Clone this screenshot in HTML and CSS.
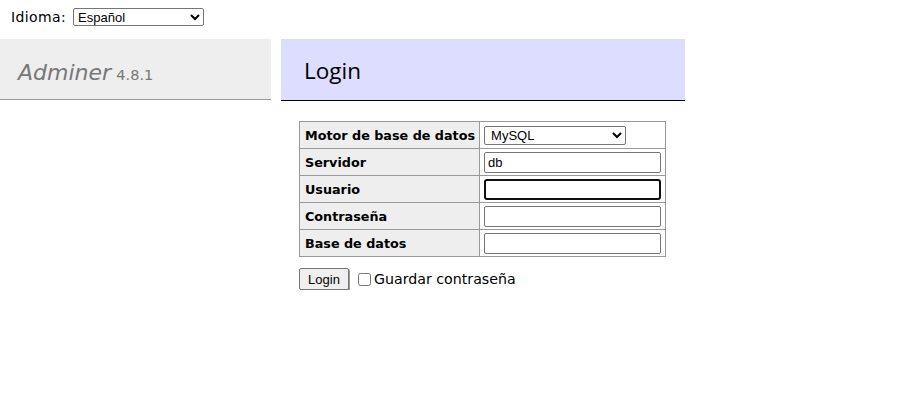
FILE: index.html
```html
<!DOCTYPE html>
<html lang="es">
<head>
<meta charset="utf-8">
<title>Login - Adminer</title>
<link rel="stylesheet" href="styles.css">
</head>
<body>
<div class="lang">
  <label>Idioma: <select class="lang-select"><option>Español</option></select></label>
</div>
<div class="main">
  <div class="menu">
    <h1><span class="brand">Adminer</span> <span class="version">4.8.1</span></h1>
  </div>
  <div class="content">
    <h2>Login</h2>
    <form class="login-form">
      <table class="login-table">
        <tr><th>Motor de base de datos</th><td><select class="driver"><option>MySQL</option></select></td></tr>
        <tr><th>Servidor</th><td><input class="field" type="text" value="db"></td></tr>
        <tr><th>Usuario</th><td><input class="field field-focus" type="text" value=""></td></tr>
        <tr><th>Contraseña</th><td><input class="field" type="password" value=""></td></tr>
        <tr><th>Base de datos</th><td><input class="field" type="text" value=""></td></tr>
      </table>
      <div class="actions">
        <button class="btn" type="button">Login</button>
        <label class="remember"><input class="check" type="checkbox">Guardar contraseña</label>
      </div>
    </form>
  </div>
</div>
</body>
</html>
```

FILE: styles.css
```css
html, body {
  margin: 0;
  padding: 0;
  background: #fff;
  color: #000;
  font-family: "DejaVu Sans", Verdana, sans-serif;
  font-size: 13px;
}

.lang {
  height: 39px;
  box-sizing: border-box;
  padding: 8px 11px 0;
  font-size: 14px;
  letter-spacing: 0.4px;
}

.lang-select {
  font-family: "Liberation Sans", Arial, sans-serif;
  font-size: 13px;
  letter-spacing: 0;
  width: 131px;
  height: 18px;
  padding: 0;
  margin-left: 2px;
  border: 1px solid #767676;
  border-radius: 2px;
  background: #fff;
  color: #000;
}

.main {
  display: flex;
  gap: 10px;
  align-items: flex-start;
}

.menu {
  width: 271px;
  flex: none;
}

.menu h1 {
  margin: 0;
  height: 61px;
  box-sizing: border-box;
  padding: 17px 18px 0;
  background: #eee;
  border-bottom: 1px solid #999;
  font-weight: normal;
  color: #777;
  white-space: nowrap;
}

.brand {
  font-size: 22px;
  font-style: italic;
}

.version {
  font-size: 14.5px;
  font-style: normal;
  margin-left: -3px;
}

.content {
  width: 404px;
  flex: none;
}

.content h2 {
  margin: 0;
  height: 62px;
  box-sizing: border-box;
  padding: 16px 23px 0;
  background: #ddf;
  border-bottom: 1px solid #000;
  font-size: 22.5px;
  font-weight: normal;
  font-family: "Open Sans", "Noto Sans", sans-serif;
}

.login-form {
  padding: 20px 0 0 18px;
}

.login-table {
  border-collapse: collapse;
  font-size: 12.75px;
  width: 365px;
}

.login-table th,
.login-table td {
  border: 1px solid #999;
  height: 27px;
  box-sizing: border-box;
  padding: 0 4px;
  text-align: left;
  vertical-align: middle;
}

.login-table th {
  background: #eee;
  font-weight: bold;
  width: 180px;
  white-space: nowrap;
  padding-left: 5px;
}

.driver {
  font-family: "Liberation Sans", Arial, sans-serif;
  font-size: 13px;
  width: 142px;
  height: 19px;
  padding: 0 2px;
  border: 1px solid #767676;
  border-radius: 2px;
  background: #fff;
  display: block;
}

.field {
  display: block;
  width: 177px;
  height: 21px;
  box-sizing: border-box;
  border: 1px solid #767676;
  border-radius: 2px;
  padding: 1px 3px;
  font-family: "Liberation Sans", Arial, sans-serif;
  font-size: 13px;
  background: #fff;
}

.field-focus {
  border: 2px solid #101010;
  border-radius: 3px;
  outline: none;
}

.actions {
  display: flex;
  align-items: center;
  margin-top: 11px;
  gap: 8px;
}

.btn {
  font-family: "Liberation Sans", Arial, sans-serif;
  font-size: 13px;
  width: 50px;
  height: 22px;
  padding: 0;
  background: #efefef;
  border: 1px solid #767676;
  border-radius: 2px;
  box-shadow: 1px 1px 0 #999;
  color: #000;
}

.remember {
  display: flex;
  align-items: center;
  font-size: 14.2px;
}

.check {
  margin: 0 3px 0 1px;
  width: 13px;
  height: 13px;
}
```
